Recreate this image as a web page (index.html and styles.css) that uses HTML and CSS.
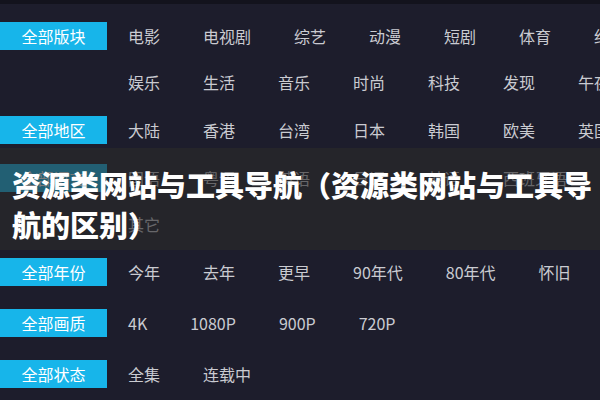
FILE: index.html
```html
<!DOCTYPE html>
<html lang="zh-CN">
<head>
<meta charset="utf-8">
<title>资源类网站与工具导航</title>
<link rel="stylesheet" href="styles.css">
</head>
<body>
<div class="page">
  <div class="filters">
    <div class="block">
      <div class="label">全部版块</div>
      <ul class="items">
        <li>电影</li><li>电视剧</li><li>综艺</li><li>动漫</li><li>短剧</li><li>体育</li><li>纪录片</li>
        <li>娱乐</li><li>生活</li><li>音乐</li><li>时尚</li><li>科技</li><li>发现</li><li>午夜</li>
      </ul>
    </div>
    <div class="block">
      <div class="label">全部地区</div>
      <ul class="items">
        <li>大陆</li><li>香港</li><li>台湾</li><li>日本</li><li>韩国</li><li>欧美</li><li>英国</li>
      </ul>
    </div>
    <div class="block">
      <div class="label">全部语言</div>
      <ul class="items">
        <li>国语</li><li>粤语</li><li>英语</li><li>日语</li><li>韩语</li><li>西班牙语</li><li>法语</li>
        <li>其它</li>
      </ul>
    </div>
    <div class="block">
      <div class="label">全部年份</div>
      <ul class="items">
        <li>今年</li><li>去年</li><li>更早</li><li>90年代</li><li>80年代</li><li>怀旧</li>
      </ul>
    </div>
    <div class="block block-spaced">
      <div class="label">全部画质</div>
      <ul class="items">
        <li>4K</li><li>1080P</li><li>900P</li><li>720P</li>
      </ul>
    </div>
    <div class="block block-spaced">
      <div class="label">全部状态</div>
      <ul class="items">
        <li>全集</li><li>连载中</li>
      </ul>
    </div>
  </div>
  <div class="banner">
    <h1 class="title">资源类网站与工具导航（资源类网站与工具导航的区别）</h1>
  </div>
</div>
</body>
</html>
```
FILE: styles.css
```css
* { box-sizing: border-box; }
html, body {
  margin: 0;
  padding: 0;
  width: 600px;
  height: 400px;
  overflow: hidden;
  background: #1d1d2c;
}
body {
  font-family: "Noto Sans CJK SC", "Noto Sans", "Liberation Sans", sans-serif;
}
.page {
  position: relative;
  width: 600px;
  height: 400px;
  overflow: hidden;
  border-top: 4px solid #13131d;
}
.filters {
  display: flex;
  flex-direction: column;
  gap: 2px;
  padding-top: 9px;
}
.block {
  display: flex;
  align-items: flex-start;
}
.block-spaced {
  margin-top: 3px;
}
.label {
  flex: none;
  width: 107px;
  height: 28px;
  margin-top: 9px;
  line-height: 28px;
  background: #17b5ea;
  color: #ffffff;
  font-size: 16px;
  text-align: center;
}
.items {
  flex: none;
  width: 540px;
  margin: 0 0 0 21px;
  padding: 0;
  list-style: none;
  display: flex;
  flex-wrap: wrap;
  column-gap: 43px;
}
.items li {
  font-size: 16px;
  line-height: 46px;
  color: #cacbd1;
  white-space: nowrap;
}
.banner {
  position: absolute;
  left: 0;
  top: 144px;
  width: 600px;
  height: 102px;
  background: rgba(42, 42, 42, 0.62);
  padding: 16px 4px 0 12px;
}
.title {
  margin: 0;
  font-size: 29px;
  font-weight: 900;
  line-height: 40px;
  color: #ffffff;
}
```
